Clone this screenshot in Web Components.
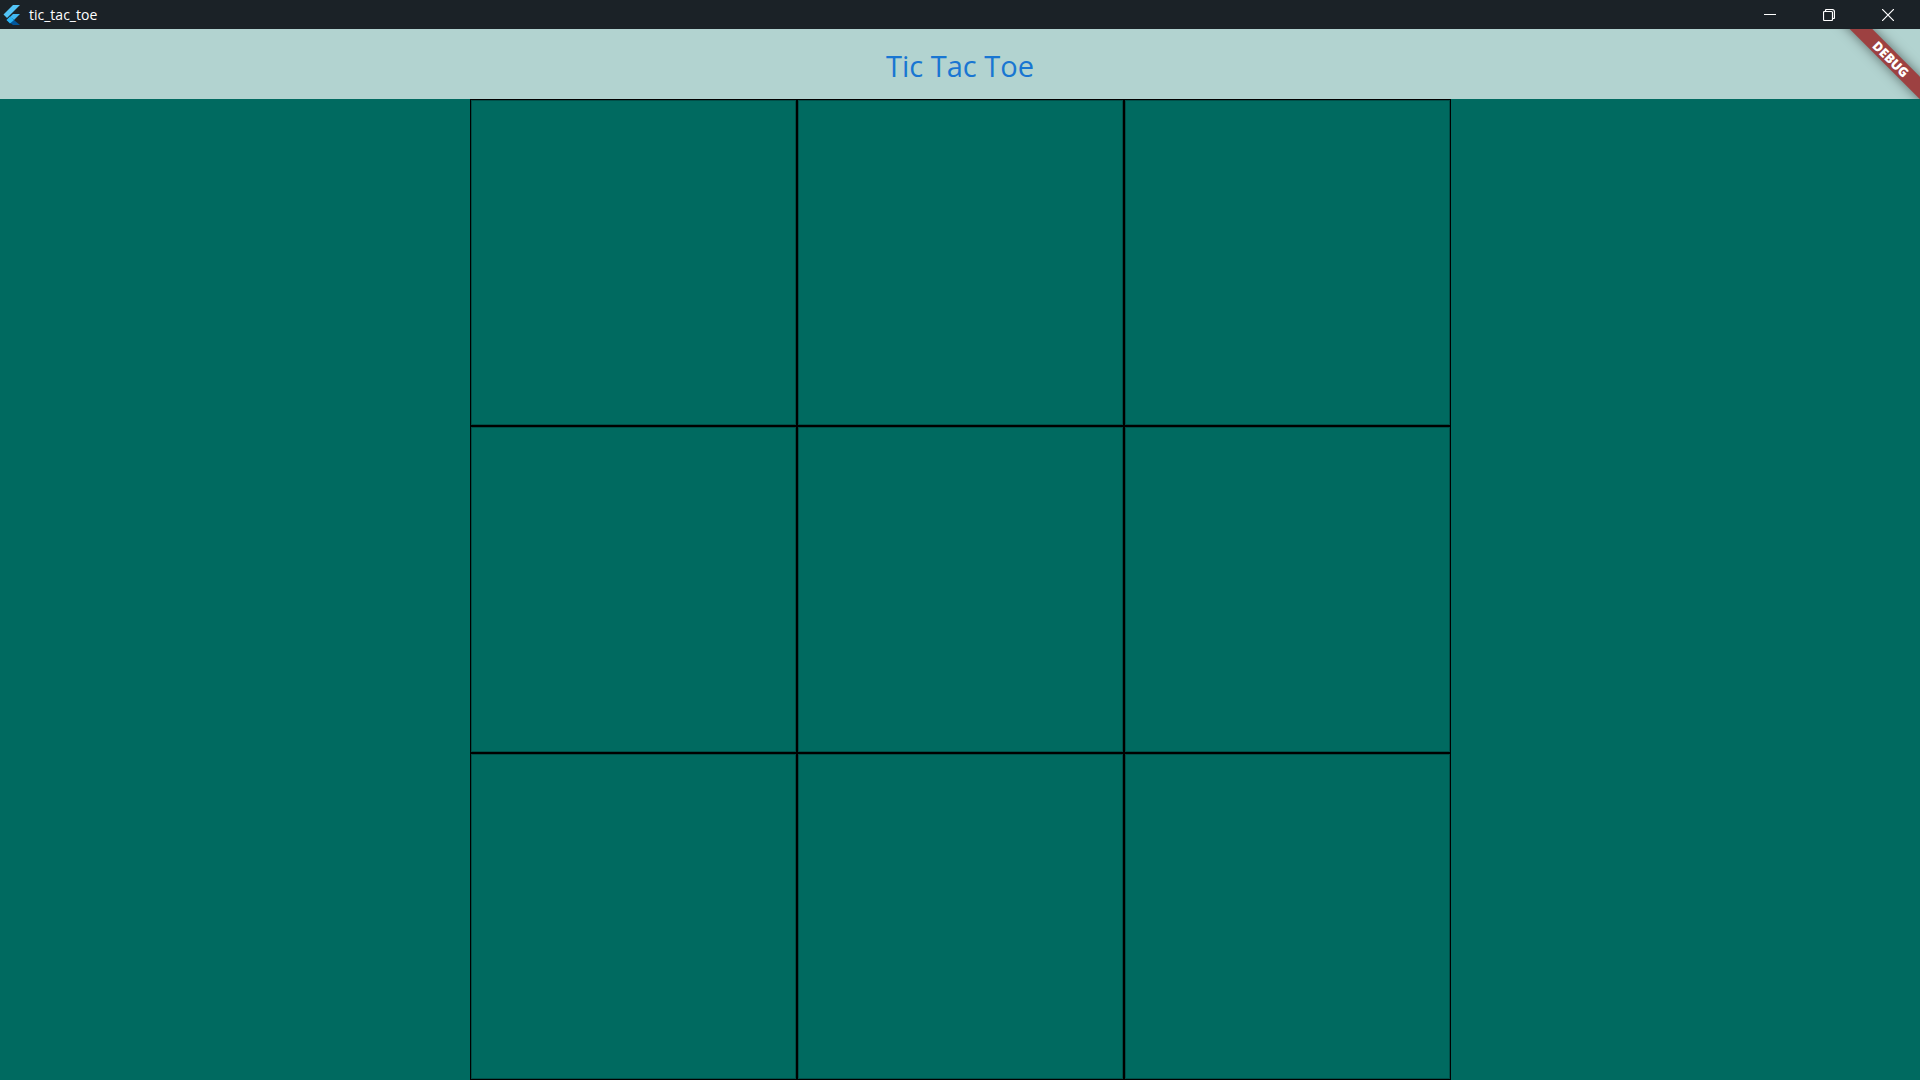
<!DOCTYPE html>
<html lang="en">
<head>
<meta charset="utf-8">
<title>tic_tac_toe</title>
<style>
  html, body { margin: 0; height: 100%; }
  body { font-family: "Open Sans", "Noto Sans", sans-serif; overflow: hidden; }
</style>
</head>
<body>
<game-window>
  <title-bar slot="chrome">tic_tac_toe</title-bar>
  <app-bar slot="header">Tic Tac Toe</app-bar>
  <game-board slot="body"></game-board>
</game-window>

<script>
const define = (name, html, setup) => {
  const template = document.createElement('template');
  template.innerHTML = html;
  customElements.define(name, class extends HTMLElement {
    constructor() {
      super();
      this.attachShadow({ mode: 'open' }).append(template.content.cloneNode(true));
      if (setup) setup(this.shadowRoot);
    }
  });
};

define('game-window', `
  <style>
    :host { display: flex; flex-direction: column; height: 100vh; background: #006a60; }
    .client { flex: 1; min-height: 0; display: flex; flex-direction: column; position: relative; overflow: hidden; }
    main { flex: 1; min-height: 0; display: flex; justify-content: center; }
  </style>
  <slot name="chrome"></slot>
  <div class="client">
    <slot name="header"></slot>
    <main><slot name="body"></slot></main>
    <debug-ribbon>DEBUG</debug-ribbon>
  </div>`);

define('title-bar', `
  <style>
    :host { display: flex; align-items: center; height: 29px; padding: 0 3px; background: #1b2227; color: #fff; font-size: 14px; line-height: 20px; }
    .icon { width: 18px; height: 22px; margin-right: 8px; flex: none; }
    .name { flex: 1; }
    nav { display: flex; align-self: stretch; }
    button { width: 59px; border: 0; padding: 0; background: none; color: #fff; display: grid; place-items: center; }
    button svg { display: block; }
  </style>
  <svg class="icon" viewBox="0 0 18 22" aria-hidden="true">
    <path d="M10 1h7L4 14 .5 10.500z" fill="#54c5f8"/>
    <path d="M10 10h7l-6 6-4-3z" fill="#40b6f0"/>
    <path d="M7 13l4 3 6 5h-7l-6.500-5z" fill="#01579b"/>
    <path d="M7 12.500l4 3.500-4 3.500L3.500 16z" fill="#29b6f6"/>
  </svg>
  <span class="name"><slot></slot></span>
  <nav>
    <button aria-label="Minimize"><svg width="12" height="12" viewBox="0 0 12 12"><path d="M0 5.500h12" stroke="currentColor"/></svg></button>
    <button aria-label="Restore"><svg width="12" height="12" viewBox="0 0 12 12" fill="none" stroke="currentColor" stroke-width="1.200"><rect x=".5" y="2.500" width="9" height="9" rx="1"/><path d="M2.500 2V1.500q0-1 1-1H9q2.500 0 2.500 2.500v5.500q0 1-1 1H10"/></svg></button>
    <button aria-label="Close"><svg width="12" height="12" viewBox="0 0 12 12"><path d="M0 0l12 12M12 0L0 12" stroke="currentColor" stroke-width="1.200"/></svg></button>
  </nav>`);

define('app-bar', `
  <style>
    :host { display: block; background: #b2d3d0; }
    h1 { margin: 0; padding: 17px 0 13px; text-align: center; font-size: 29px; line-height: 40px; font-weight: 400; color: #1976d2; }
  </style>
  <h1><slot></slot></h1>`);

define('debug-ribbon', `
  <style>
    :host { position: absolute; top: 0; right: 0; width: 100px; height: 70px; overflow: hidden; pointer-events: none; }
    span { position: absolute; top: 22px; right: -71px; width: 200px; height: 16px; transform: rotate(45deg); background: #9d4141; box-shadow: 0 0 12px rgba(0,0,0,.5); color: #fff; font-size: 13px; font-weight: 800; line-height: 16px; text-align: center; }
  </style>
  <span><slot></slot></span>`);

define('game-board', `
  <style>
    :host { display: grid; grid-template: repeat(3, 1fr) / repeat(3, 1fr); height: 100%; aspect-ratio: 1; }
    button { border: 1px solid #000; padding: 0; background: none; box-shadow: inset 0 0 0 1px rgba(0,0,0,.25); }
  </style>`, root => {
  for (let i = 1; i <= 9; i++) {
    const cell = document.createElement('button');
    cell.setAttribute('aria-label', 'Cell ' + i);
    root.append(cell);
  }
});
</script>
</body>
</html>
